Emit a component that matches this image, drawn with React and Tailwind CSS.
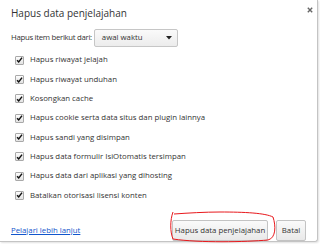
import React from "react";

const items = [
  "Hapus riwayat jelajah",
  "Hapus riwayat unduhan",
  "Kosongkan cache",
  "Hapus cookie serta data situs dan plugin lainnya",
  "Hapus sandi yang disimpan",
  "Hapus data formulir IsiOtomatis tersimpan",
  "Hapus data dari aplikasi yang dihosting",
  "Batalkan otorisasi lisensi konten",
];

function Check() {
  return (
    <span className="w-[9px] h-[9px] border border-[#a9a9a9] rounded-[1px] bg-gradient-to-b from-[#fdfdfd] to-[#e3e3e3] flex items-center justify-center shrink-0">
      <svg width="8" height="8" viewBox="0 0 8 8">
        <path d="M1.2 4.2 L3.1 6.2 L6.9 1.3" fill="none" stroke="#111" strokeWidth="1.7" />
      </svg>
    </span>
  );
}

export default function App() {
  return (
    <div
      className="w-[320px] h-[244px] bg-white relative overflow-hidden text-[#333]"
      style={{ fontFamily: '"Open Sans", "Noto Sans", sans-serif' }}
    >
      <div className="w-[318px] h-[242px] border-r border-b border-[#c4c4c4] rounded-br-[3px] shadow-[1px_1px_2px_rgba(0,0,0,0.12)] flex flex-col pl-[11px] pr-[10px]">
        <div className="flex items-start justify-between pt-[6px] h-[27px]">
          <span className="text-[10px] leading-[14px] text-[#333]">Hapus data penjelajahan</span>
          <svg width="6" height="6" viewBox="0 0 6 6" className="mt-[1px] mr-[-6px]">
            <path d="M0.8 0.8 L5.2 5.2 M5.2 0.8 L0.8 5.2" stroke="#666" strokeWidth="1.4" />
          </svg>
        </div>
        <div className="flex items-center h-[21px] text-[7.8px] mt-[1px]">
          <span className="mr-[2px] shrink-0 whitespace-nowrap tracking-[-0.3px]">Hapus item berikut dari:</span>
          <div className="w-[84px] h-[18px] border border-[#c6c6c6] rounded-[2px] bg-gradient-to-b from-[#fafafa] to-[#ececec] flex items-center justify-between pl-[7px] pr-[5px]">
            <span>awal waktu</span>
            <svg width="6" height="4" viewBox="0 0 6 4">
              <path d="M0 0 L6 0 L3 3.5 Z" fill="#222" />
            </svg>
          </div>
        </div>
        <div className="flex flex-col mt-[2px] pl-[4px] text-[7.8px]">
          {items.map((t) => (
            <div key={t} className="flex items-center gap-[6px] h-[19.3px]">
              <Check />
              <span>{t}</span>
            </div>
          ))}
        </div>
        <div className="flex items-center justify-between mt-[15px] text-[7.8px]">
          <a className="text-[#1155cc] underline">Pelajari lebih lanjut</a>
          <div className="flex items-center gap-[8px] mr-[1px]">
            <button className="h-[21px] w-[96px] border border-[#c3c3c3] rounded-[2px] bg-gradient-to-b from-[#fafafa] to-[#e9e9e9] text-[#333]">
              Hapus data penjelajahan
            </button>
            <button className="h-[21px] w-[30px] border border-[#c3c3c3] rounded-[2px] bg-gradient-to-b from-[#fafafa] to-[#e9e9e9] text-[#333]">
              Batal
            </button>
          </div>
        </div>
      </div>
      <svg className="absolute left-0 top-0 pointer-events-none" width="320" height="244" viewBox="0 0 320 244">
        <path
          d="M173 212 C170 220 170 232 173 239 C200 243 245 242 268 240 C276 238 276 226 273 217 C265 213 245 212 220 212 C205 212 188 213 174 214"
          fill="none"
          stroke="#e8181c"
          strokeWidth="1"
        />
      </svg>
    </div>
  );
}
